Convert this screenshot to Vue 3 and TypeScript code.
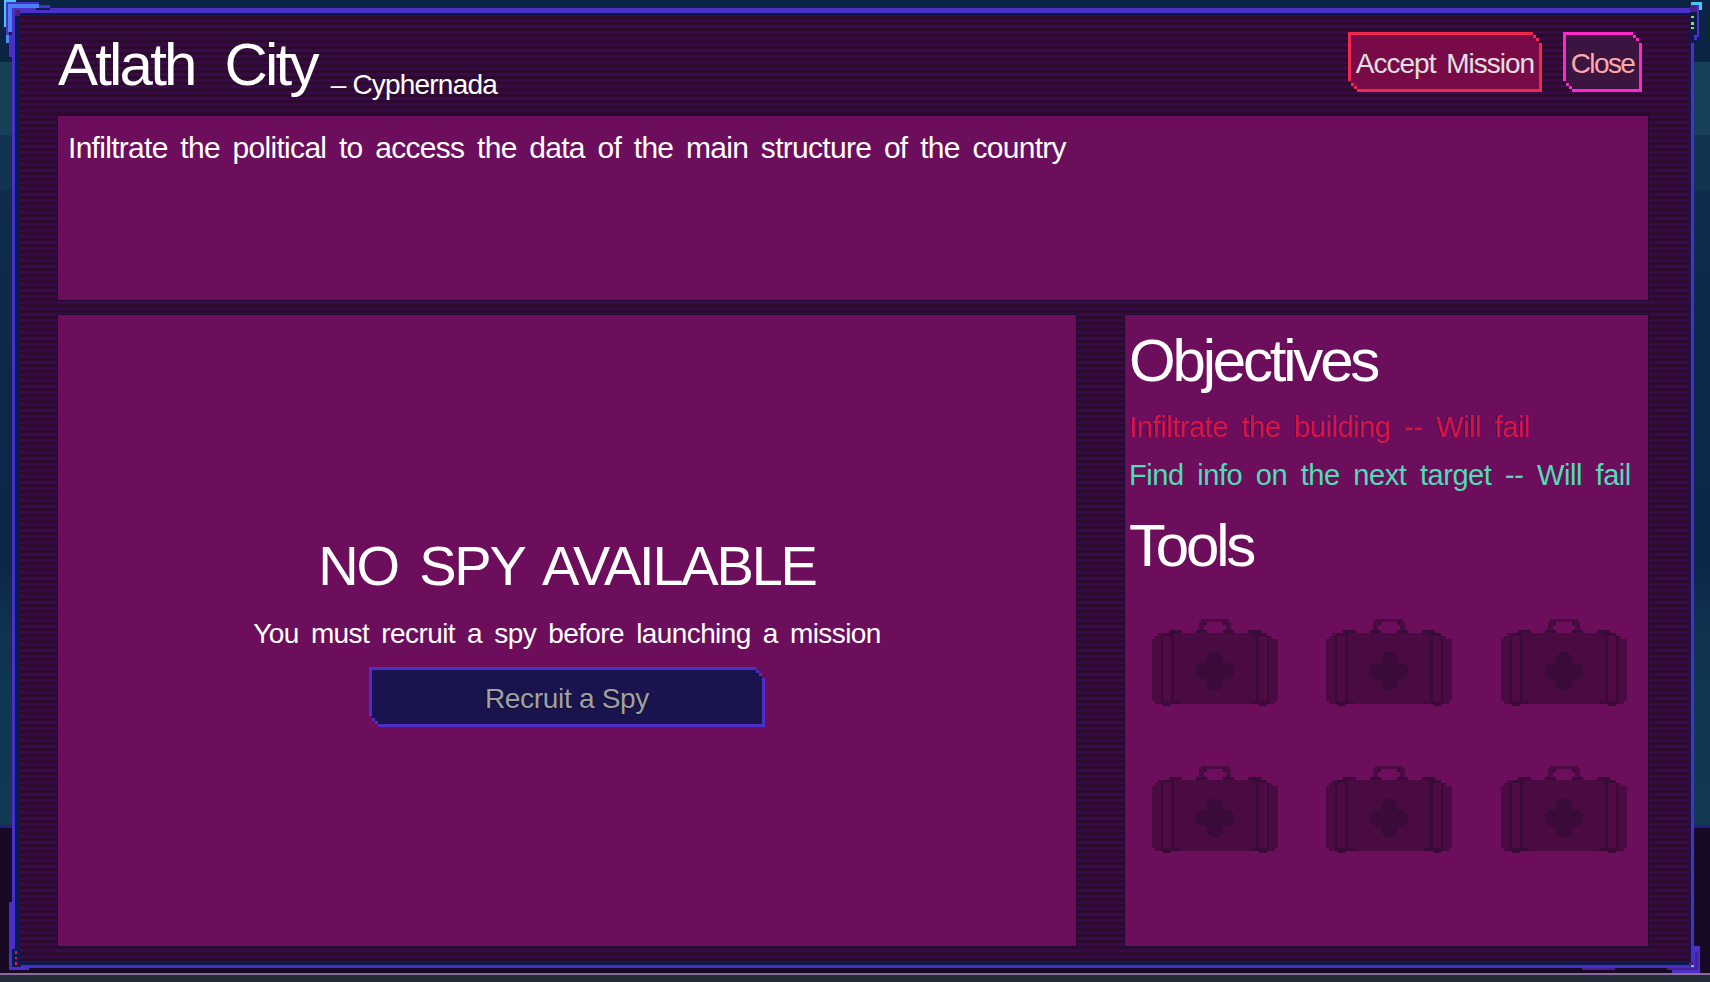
<script setup lang="ts">
interface Objective {
  label: string
  failed: boolean
}

const objectives: Objective[] = [
  { label: 'Infiltrate the building -- Will fail', failed: true },
  { label: 'Find info on the next target -- Will fail', failed: false },
]

const toolSlots: number[] = [1, 2, 3, 4, 5, 6]
</script>

<template>
  <div class="page">
    <div class="frame">
      <div class="frame-inner">
        <header class="head">
          <h1 class="title">Atlath City<span class="country">– Cyphernada</span></h1>
          <div class="actions">
            <button class="px-btn accept"><span>Accept Mission</span></button>
            <button class="px-btn close"><span>Close</span></button>
          </div>
        </header>

        <section class="panel brief">Infiltrate the political to access the data of the main structure of the country</section>

        <div class="lower">
          <section class="panel spy">
            <h2 class="spy-title">NO SPY AVAILABLE</h2>
            <p class="spy-text">You must recruit a spy before launching a mission</p>
            <button class="px-btn recruit"><span>Recruit a Spy</span></button>
          </section>

          <section class="panel side">
            <h2 class="side-title">Objectives</h2>
            <p
              v-for="o in objectives"
              :key="o.label"
              class="objective"
              :class="{ failed: o.failed }"
            >{{ o.label }}</p>
            <h2 class="side-title tools-title">Tools</h2>
            <div class="tools">
              <svg
                v-for="n in toolSlots"
                :key="n"
                class="case"
                viewBox="0 0 378 261"
                shape-rendering="crispEdges"
              >
                <!-- handle -->
                <path fill="#4a0a42" d="M147 0h84v9h-84zM141 9h15v24h-15zM222 9h15v24h-15z" />
                <path fill="#3a0a38" d="M156 9h10v9h-10zM212 9h10v9h-10zM132 33h33v8h-33zM214 33h32v8h-32z" />
                <!-- body -->
                <path fill="#4a0a42" d="M19 41h322v10h19v10h18v184h-9v9H9v-9H0V61h9V51h10z" />
                <!-- straps -->
                <path fill="#500b47" d="M33 41h24v213H33zM321 41h25v213h-25z" />
                <path fill="#3a0a38" d="M28 51h5v203h-5zM57 51h9v194h-9zM313 51h8v194h-8zM346 51h5v203h-5z" />
                <path fill="#3a0a38" d="M51 33h39v8H51zM33 41h33v10H33zM288 33h39v8h-39zM303 41h43v10h-43z" />
                <path fill="#3a0a38" d="M33 245h51v9H33zM33 254h24v7H33zM294 245h52v9h-52zM321 254h25v7h-25z" />
                <!-- cross -->
                <path fill="#3a0a38" d="M174 99h30v9h9v25h24v9h9v28h-9v9h-24v25h-9v9h-30v-9h-9v-25h-24v-9h-9v-28h9v-9h24v-25h9z" />
              </svg>
            </div>
          </section>
        </div>
      </div>
    </div>
    <div class="ground"></div>

    <!-- frame corner ornaments -->
    <svg class="corner tl" viewBox="0 0 52 58" shape-rendering="crispEdges">
      <rect x="4" y="0" width="12" height="3" fill="#4cc4f4" />
      <rect x="4" y="0" width="3" height="27" fill="#4cc4f4" />
      <rect x="6" y="2" width="33" height="3" fill="#4a30c8" />
      <rect x="39" y="5" width="11" height="3" fill="#4a30c8" />
      <rect x="6" y="2" width="3" height="33" fill="#4a30c8" />
      <rect x="8" y="4" width="31" height="4" fill="#4a80f0" />
      <rect x="8" y="4" width="4" height="28" fill="#4a80f0" />
      <rect x="12" y="8" width="24" height="3" fill="#4a30c8" />
      <rect x="12" y="8" width="3" height="27" fill="#4a30c8" />
      <rect x="15" y="10" width="5" height="6" fill="#5a1a80" />
      <rect x="36" y="8" width="14" height="2" fill="#0c1a50" />
      <rect x="6" y="35" width="3" height="8" fill="#4a90f0" />
      <rect x="9" y="35" width="3" height="22" fill="#4a30c8" />
    </svg>
    <svg class="corner tr" viewBox="0 0 22 42" shape-rendering="crispEdges">
      <rect x="1" y="0" width="11" height="3" fill="#4cc4f4" />
      <rect x="9" y="0" width="3" height="8" fill="#4cc4f4" />
      <rect x="0" y="3" width="9" height="38" fill="#0c1a50" />
      <rect x="7" y="3" width="2" height="32" fill="#4a30c8" />
      <rect x="0" y="3" width="7" height="7" fill="#4a2090" />
      <rect x="1" y="14" width="3" height="2" fill="#8ce050" />
      <rect x="1" y="20" width="3" height="3" fill="#8ce050" />
      <rect x="1" y="25" width="3" height="2" fill="#8ce050" />
      <rect x="4" y="33" width="3" height="5" fill="#4a30c8" />
    </svg>
    <svg class="corner bl" viewBox="0 0 20 68" shape-rendering="crispEdges">
      <rect x="0" y="0" width="3" height="68" fill="#4a30c8" />
      <rect x="0" y="65" width="20" height="3" fill="#4a30c8" />
      <rect x="3" y="47" width="9" height="18" fill="#0c1a50" />
      <rect x="6" y="49" width="2" height="3" fill="#e01848" />
      <rect x="6" y="55" width="2" height="2" fill="#e01848" />
      <rect x="6" y="60" width="2" height="3" fill="#e01848" />
    </svg>
    <svg class="corner br" viewBox="0 0 34 28" shape-rendering="crispEdges">
      <rect x="28" y="0" width="6" height="27" fill="#4a30c8" />
      <rect x="29" y="6" width="3" height="20" fill="#4a2090" />
      <rect x="6" y="24" width="28" height="3" fill="#4a30c8" />
      <rect x="1" y="22" width="28" height="2" fill="#4a2090" />
      <rect x="23" y="16" width="5" height="5" fill="#5a1a80" />
      <rect x="25" y="19" width="3" height="2" fill="#4cc4f4" />
    </svg>
    <div class="chip"></div>
  </div>
</template>

<style>
html,
body {
  margin: 0;
  background: #180a24;
}
</style>

<style scoped>
.page {
  position: relative;
  width: 1710px;
  height: 982px;
  box-sizing: border-box;
  padding: 8px 16px 0 12px;
  overflow: hidden;
  font-family: "Liberation Sans", Arial, sans-serif;
  color: #fff;
  background: linear-gradient(
    to bottom,
    #0c2444 0,
    #0c2444 62px,
    #164058 62px,
    #164058 135px,
    #123450 135px,
    #123450 190px,
    #0e2c4c 190px,
    #0c2648 560px,
    #103450 640px,
    #123a54 825px,
    #2a1a80 825px,
    #2a1a80 828px,
    #180a24 828px
  );
}

.frame {
  height: 960px;
  box-sizing: border-box;
  border: 3px solid #4a30c8;
  border-top-width: 5px;
}

.frame-inner {
  height: 100%;
  box-sizing: border-box;
  border: solid #0c1a50;
  border-width: 3px 2px 3px 5px;
  padding: 0 41px 16px 38px;
  background: repeating-linear-gradient(to bottom, #2c0a2e 0, #2c0a2e 3px, #380a4c 3px, #380a4c 6px);
}

.ground {
  height: 9px;
  margin: 5px -16px 0 -12px;
  box-sizing: border-box;
  border-top: 2px solid #8a6a9a;
  background: #242c38;
}

.head {
  height: 100px;
  box-sizing: border-box;
  padding: 16px 6px 0 0;
  display: flex;
  justify-content: space-between;
  align-items: flex-start;
}

.title {
  margin: -3px 0 0;
  font-size: 60px;
  font-weight: 400;
  line-height: 72px;
  letter-spacing: -2.8px;
  word-spacing: 16px;
  white-space: nowrap;
}

.country {
  margin-left: 14px;
  font-size: 28px;
  letter-spacing: -0.8px;
  word-spacing: 0;
  vertical-align: -9px;
}

.actions {
  display: flex;
  gap: 21px;
}

.px-btn {
  position: relative;
  display: block;
  height: 60px;
  padding: 3px 0 0;
  border: 0;
  font: inherit;
  font-size: 28px;
  white-space: nowrap;
  clip-path: polygon(0 0, calc(100% - 9px) 0, calc(100% - 9px) 3px, calc(100% - 6px) 3px, calc(100% - 6px) 6px, calc(100% - 3px) 6px, calc(100% - 3px) 11px, 100% 11px, 100% 100%, 9px 100%, 9px calc(100% - 3px), 6px calc(100% - 3px), 6px calc(100% - 6px), 3px calc(100% - 6px), 3px calc(100% - 11px), 0 calc(100% - 11px));
}

.px-btn::before {
  content: "";
  position: absolute;
  inset: 3px;
  clip-path: polygon(0 0, calc(100% - 6px) 0, calc(100% - 6px) 3px, calc(100% - 3px) 3px, calc(100% - 3px) 6px, 100% 6px, 100% 100%, 6px 100%, 6px calc(100% - 3px), 3px calc(100% - 3px), 3px calc(100% - 6px), 0 calc(100% - 6px));
}

.px-btn span {
  position: relative;
}

.accept {
  width: 194px;
  letter-spacing: -1px;
  word-spacing: 4px;
  background: #f02850;
  color: #e0e0e0;
}

.accept::before {
  background: #780a48;
}

.close {
  width: 79px;
  letter-spacing: -1.6px;
  background: #ff28c8;
  color: #ffa8a8;
}

.close::before {
  background: #3c1440;
}

.panel {
  background: #6c0e5c;
  box-shadow: 0 0 0 1px #1c0a30;
}

.brief {
  height: 184px;
  box-sizing: border-box;
  padding: 14px 10px;
  font-size: 30px;
  line-height: 36px;
  letter-spacing: -0.7px;
  word-spacing: 5px;
}

.lower {
  margin-top: 15px;
  display: grid;
  grid-template-columns: 1018px 523px;
  column-gap: 49px;
  height: 631px;
}

.spy {
  display: flex;
  flex-direction: column;
  align-items: center;
  justify-content: center;
  padding-bottom: 4px;
  box-sizing: border-box;
}

.spy-title {
  margin: 0;
  font-size: 56px;
  font-weight: 400;
  line-height: 72px;
  letter-spacing: -2.2px;
  word-spacing: 8px;
}

.spy-text {
  margin: 15px 0 0;
  font-size: 28px;
  line-height: 34px;
  letter-spacing: -0.6px;
  word-spacing: 5px;
}

.recruit {
  width: 396px;
  margin-top: 16px;
  letter-spacing: -0.3px;
  background: #4a30c8;
  color: #a0a0a0;
  text-shadow: -1px 1px 0 #0c0a30;
}

.recruit::before {
  background: #1a144e;
}

.side {
  padding: 10px 0 0 4px;
}

.side-title {
  margin: 0 0 6px;
  font-size: 60px;
  font-weight: 400;
  line-height: 72px;
  letter-spacing: -3.2px;
}

.objective {
  margin: 0;
  font-size: 29px;
  line-height: 48px;
  letter-spacing: -0.45px;
  word-spacing: 6px;
  color: #50dcb4;
}

.objective.failed {
  color: #d81440;
  text-shadow: -1px 0 0 #3a0a60;
}

.tools-title {
  margin: 11px 0 0;
}

.tools {
  margin: 37px 0 0 -1.5px;
  display: grid;
  grid-template-columns: repeat(3, 174.5px);
  row-gap: 60px;
  justify-items: center;
}

.case {
  display: block;
  width: 126px;
  height: 87px;
}

.corner {
  position: absolute;
}

.tl {
  left: 0;
  top: 0;
  width: 52px;
  height: 58px;
}

.tr {
  left: 1690px;
  top: 2px;
  width: 22px;
  height: 42px;
}

.bl {
  left: 9px;
  top: 902px;
  width: 20px;
  height: 68px;
}

.br {
  left: 1666px;
  top: 946px;
  width: 34px;
  height: 28px;
}

.chip {
  position: absolute;
  left: 1582px;
  top: 968px;
  width: 33px;
  height: 2px;
  background: #4a2090;
}
</style>
